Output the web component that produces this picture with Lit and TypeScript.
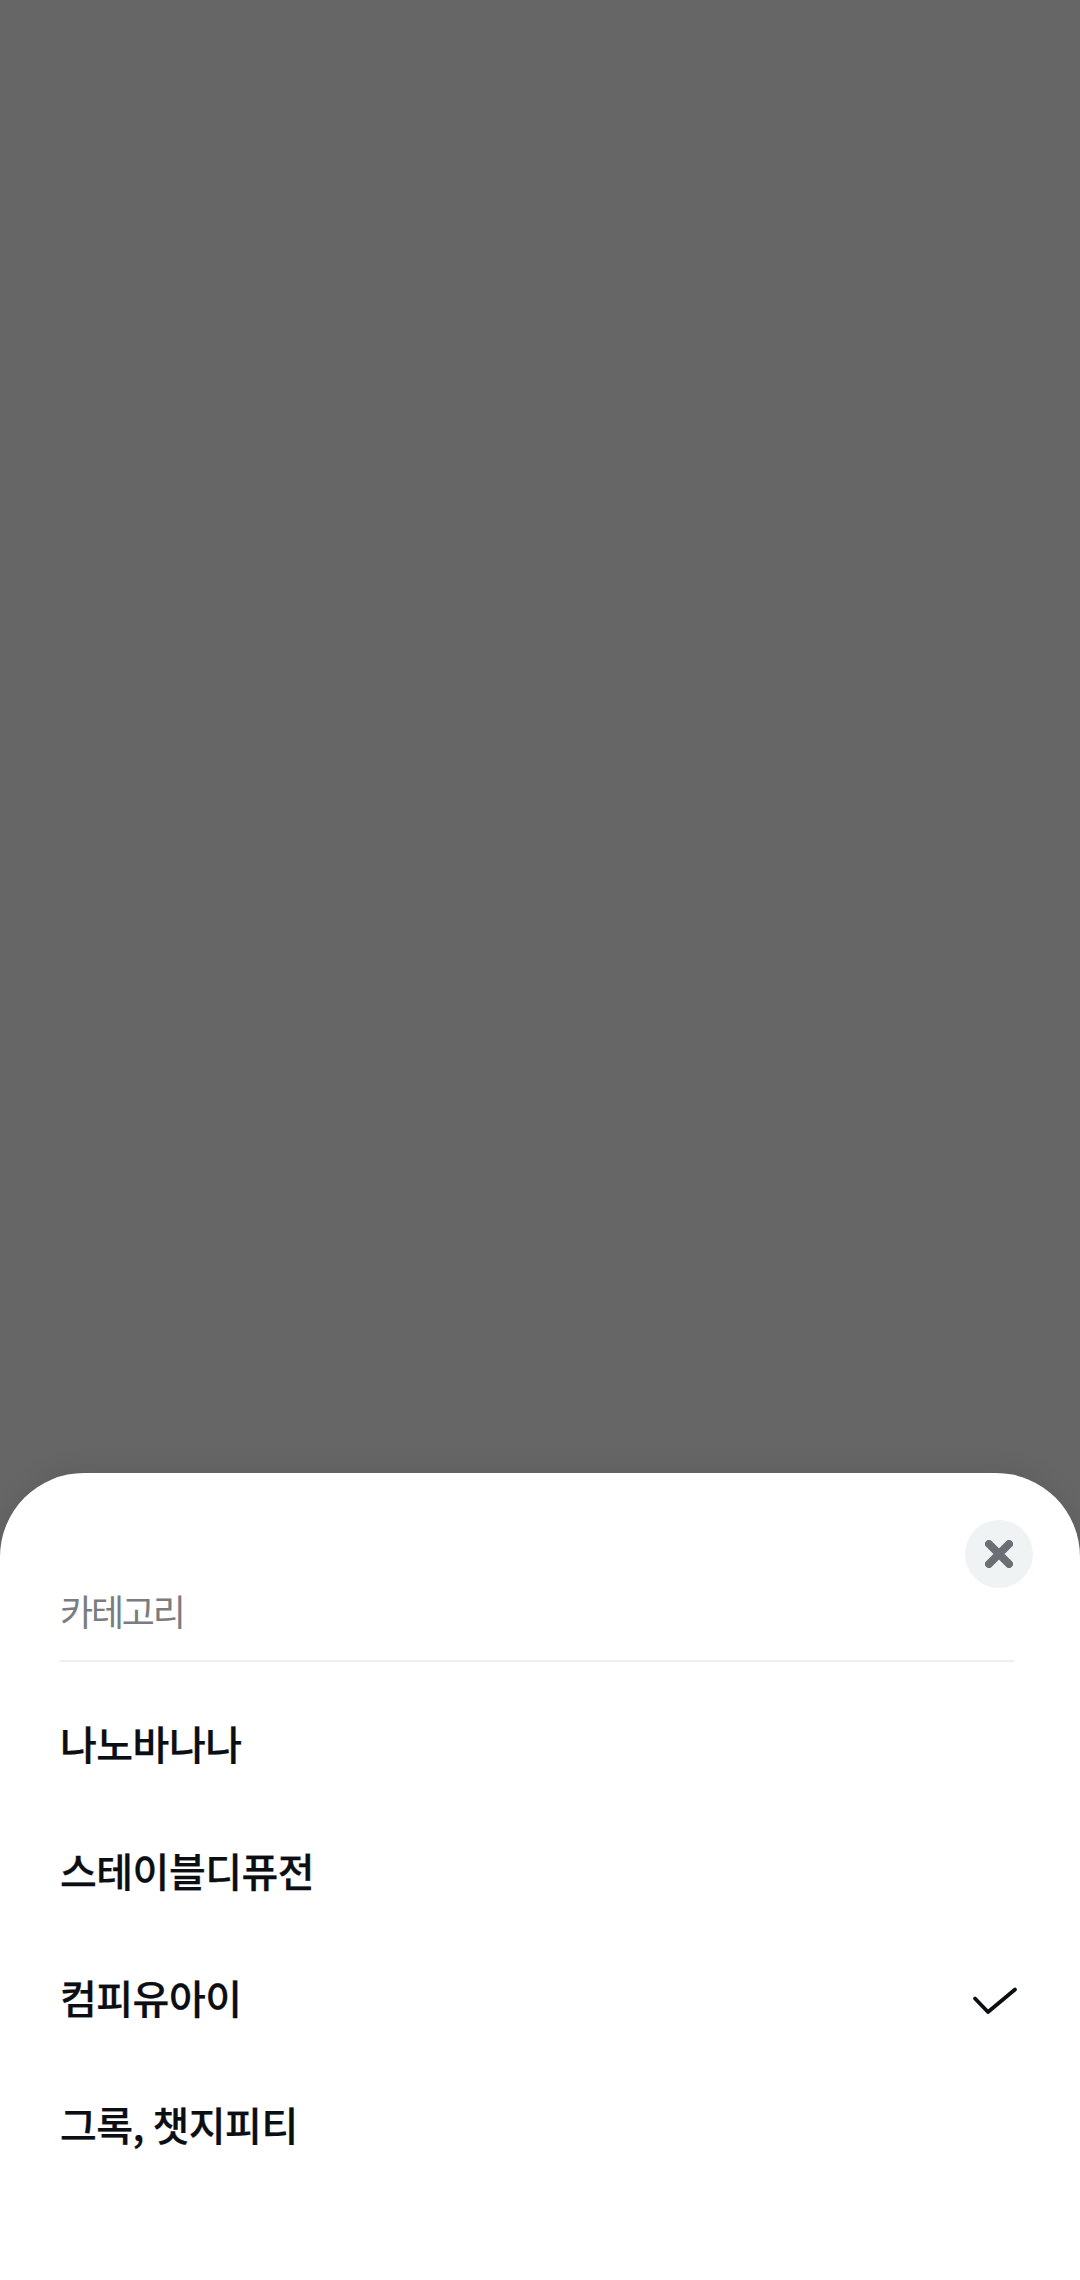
import { LitElement, html, css } from "lit";
import { customElement } from "lit/decorators.js";

const ITEMS = ["나노바나나", "스테이블디퓨전", "컴피유아이", "그록, 챗지피티"];
const SELECTED = 2;

@customElement("app-root")
export class AppRoot extends LitElement {
  static styles = css`
    :host {
      display: flex;
      flex-direction: column;
      justify-content: flex-end;
      width: 1080px;
      height: 2280px;
      background: #666666;
      font-family: "Noto Sans CJK KR", "Noto Sans", sans-serif;
      overflow: hidden;
    }
    .sheet {
      height: 807px;
      box-sizing: border-box;
      background: #fff;
      border-radius: 84px 84px 0 0;
      padding: 47px 66px 0 60px;
      box-shadow: 0 -4px 24px rgba(0, 0, 0, 0.08);
      display: flex;
      flex-direction: column;
    }
    .close-row {
      display: flex;
      justify-content: flex-end;
      margin-right: -19px;
      height: 68px;
    }
    .close {
      width: 68px;
      height: 68px;
      border-radius: 50%;
      background: #f0f3f4;
      display: flex;
      align-items: center;
      justify-content: center;
    }
    .label {
      font-size: 36px;
      line-height: 52px;
      letter-spacing: -2.2px;
      color: #7a7d80;
      font-weight: 400;
      height: 76px;
      margin-top: -4px;
      border-bottom: 2px solid #eceeef;
      box-sizing: content-box;
    }
    .list {
      display: flex;
      flex-direction: column;
      margin-top: 17px;
    }
    .item {
      height: 127px;
      display: flex;
      align-items: center;
      justify-content: space-between;
      font-size: 40px;
      font-weight: 500;
      letter-spacing: -0.5px;
      color: #0b0e13;
      -webkit-text-stroke: 0.25px #0b0e13;
    }
    .check {
      margin-right: -4px;
    }
  `;

  render() {
    return html`
      <div class="sheet">
        <div class="close-row">
          <div class="close">
            <svg width="28" height="28" viewBox="0 0 28 28">
              <path d="M4 4L24 24M24 4L4 24" stroke="#6b6f73" stroke-width="8" stroke-linecap="round" fill="none" />
            </svg>
          </div>
        </div>
        <div class="label">카테고리</div>
        <div class="list">
          ${ITEMS.map(
            (t, i) => html`
              <div class="item">
                <span>${t}</span>
                ${i === SELECTED
                  ? html`<svg class="check" width="46" height="40" viewBox="0 0 46 40">
                      <path d="M3 21.5L16 35L43 12.5" stroke="#0b0e13" stroke-width="3.8" stroke-linecap="round" stroke-linejoin="round" fill="none" />
                    </svg>`
                  : ""}
              </div>
            `
          )}
        </div>
      </div>
    `;
  }
}
